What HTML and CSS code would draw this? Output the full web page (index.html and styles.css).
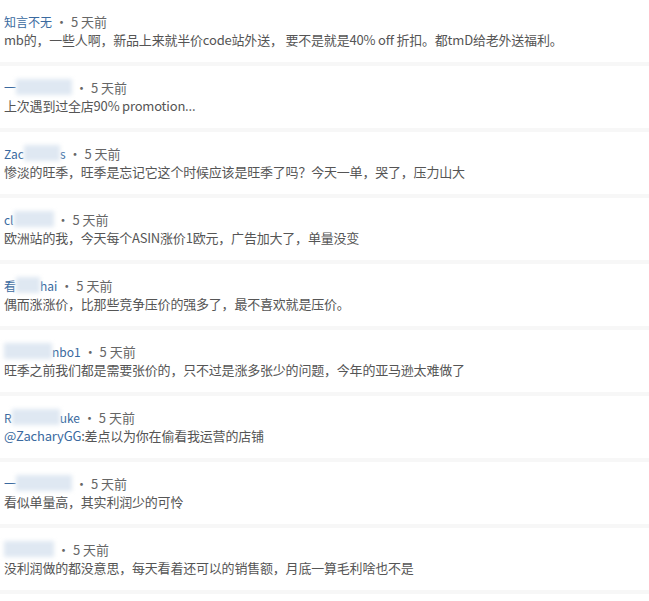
FILE: index.html
```
<!DOCTYPE html>
<html lang="zh-CN">
<head>
    <meta charset="UTF-8">
    <meta name="viewport" content="width=device-width, initial-scale=1.0">
    <title>评论列表</title>
    <link rel="stylesheet" href="styles.css">
</head>
<body>

    <ul class="comment-list">
        <li class="comment">
            <div class="meta"><span class="author">知言不无</span><span class="time">• 5 天前</span></div>
            <p class="text">mb的，一些人啊，新品上来就半价code站外送， 要不是就是40% off 折扣。都tmD给老外送福利。</p>
        </li>
        <li class="comment">
            <div class="meta"><span class="author">一<span class="mask w56"></span></span><span class="time">• 5 天前</span></div>
            <p class="text">上次遇到过全店90% promotion...</p>
        </li>
        <li class="comment">
            <div class="meta"><span class="author">Zac<span class="mask w36"></span>s</span><span class="time">• 5 天前</span></div>
            <p class="text">惨淡的旺季，旺季是忘记它这个时候应该是旺季了吗？今天一单，哭了，压力山大</p>
        </li>
        <li class="comment">
            <div class="meta"><span class="author">cl<span class="mask w40"></span></span><span class="time">• 5 天前</span></div>
            <p class="text">欧洲站的我，今天每个ASIN涨价1欧元，广告加大了，单量没变</p>
        </li>
        <li class="comment">
            <div class="meta"><span class="author">看<span class="mask w24"></span>hai</span><span class="time">• 5 天前</span></div>
            <p class="text">偶而涨涨价，比那些竞争压价的强多了，最不喜欢就是压价。</p>
        </li>
        <li class="comment">
            <div class="meta"><span class="author"><span class="mask w48"></span>nbo1</span><span class="time">• 5 天前</span></div>
            <p class="text">旺季之前我们都是需要张价的，只不过是涨多张少的问题，今年的亚马逊太难做了</p>
        </li>
        <li class="comment">
            <div class="meta"><span class="author">R<span class="mask w48"></span>uke</span><span class="time">• 5 天前</span></div>
            <p class="text"><span class="reply">@ZacharyGG</span>:差点以为你在偷看我运营的店铺</p>
        </li>
        <li class="comment">
            <div class="meta"><span class="author">一<span class="mask w56"></span></span><span class="time">• 5 天前</span></div>
            <p class="text">看似单量高，其实利润少的可怜</p>
        </li>
        <li class="comment">
            <div class="meta"><span class="author"><span class="mask w50"></span></span><span class="time">• 5 天前</span></div>
            <p class="text">没利润做的都没意思，每天看着还可以的销售额，月底一算毛利啥也不是</p>
        </li>
    </ul>

</body>
</html>
```

FILE: styles.css
```
* {
    margin: 0;
    padding: 0;
    box-sizing: border-box;
}

body {
    font-family: "Microsoft YaHei", "Noto Sans CJK SC", "Noto Sans", sans-serif;
    background-color: #ffffff;
    color: #555;
}

.comment-list {
    list-style: none;
}

/* each comment is followed by a soft grey band */
.comment {
    padding: 12px 4px 12px;
    border-bottom: 4px solid #f7f7f7;
}

.meta {
    display: flex;
    align-items: center;
    height: 18px;
    font-size: 12px;
}

.author {
    color: #3a6aa0;
    display: flex;
    align-items: center;
}

.time {
    color: #666;
    font-size: 13px;
    margin-left: 3px;
}

/* blurred user names */
.mask {
    display: inline-block;
    height: 16px;
    background-color: #dfe8f2;
    filter: blur(2px);
}

.w24 { width: 24px; }
.w36 { width: 36px; }
.w40 { width: 40px; }
.w48 { width: 48px; }
.w50 { width: 50px; }
.w56 { width: 56px; }

.text {
    font-size: 13px;
    line-height: 20px;
    letter-spacing: -0.2px;
    color: #555;
}

.reply {
    color: #3a6aa0;
}
```
